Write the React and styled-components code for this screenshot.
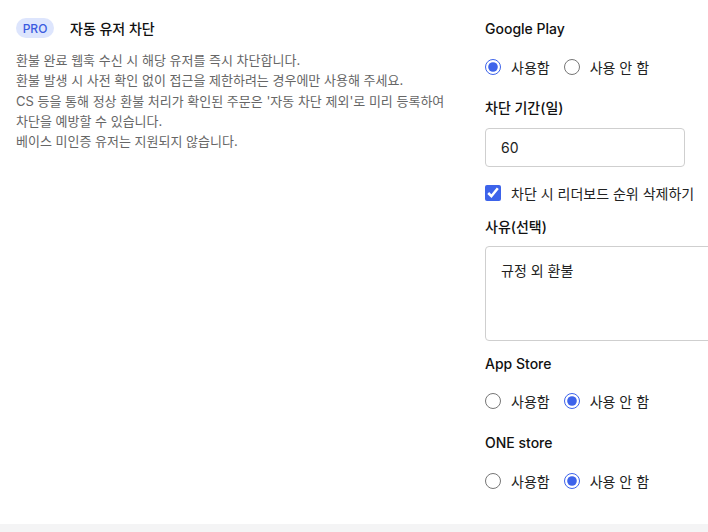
import React from "react";
import styled, { createGlobalStyle } from "styled-components";

const Global = createGlobalStyle`
  html, body { margin: 0; padding: 0; background: #f4f4f5; overflow: hidden; }
  body { font-family: Inter, "Noto Sans CJK KR", sans-serif; color: #222; }
  * { box-sizing: border-box; }
`;

const Page = styled.div`
  background: #fff;
  display: flex;
  gap: 29px;
  padding: 18px 0 33px 16px;
  overflow: hidden;
`;

const LeftCol = styled.div`
  width: 440px;
  flex-shrink: 0;
`;

const Header = styled.div`
  display: flex;
  align-items: center;
  gap: 16px;
  height: 20px;
`;

const Badge = styled.span`
  display: inline-flex;
  align-items: center;
  justify-content: center;
  width: 38px;
  height: 20px;
  border-radius: 10px;
  background: #dde5fd;
  color: #3a5be0;
  font-size: 12px;
  font-weight: 500;
`;

const Title = styled.span`
  font-size: 14px;
  font-weight: 500;
  color: #111;
`;

const Desc = styled.p`
  margin: 12px 0 0;
  font-size: 13px;
  line-height: 20.3px;
  color: #666;
  white-space: nowrap;
`;

const RightCol = styled.div`
  width: 300px;
  flex-shrink: 0;
  display: flex;
  flex-direction: column;
`;

const Label = styled.div`
  font-size: 14px;
  font-weight: 500;
  line-height: 20px;
  color: #111;
  margin-top: ${(p) => p.$mt || 0}px;
`;

const RadioRow = styled.div`
  display: flex;
  align-items: center;
  height: 20px;
  margin-top: ${(p) => p.$mt || 0}px;
  gap: 14px;
`;

const Option = styled.label`
  display: inline-flex;
  align-items: center;
  gap: 10px;
  font-size: 14px;
  color: #222;
`;

const Radio = styled.input.attrs({ type: "radio" })`
  width: 16px;
  height: 16px;
  margin: 0;
  accent-color: #3d63ea;
`;

const Check = styled.input.attrs({ type: "checkbox" })`
  width: 16px;
  height: 16px;
  margin: 0;
  accent-color: #3d63ea;
`;

const TextInput = styled.input`
  width: 200px;
  height: 39px;
  margin-top: 10px;
  border: 1px solid #cfcfcf;
  border-radius: 4px;
  padding: 0 15px;
  font-family: inherit;
  font-size: 14px;
  color: #222;
  outline: none;
`;

const CheckRow = styled.label`
  display: flex;
  align-items: center;
  gap: 10px;
  height: 20px;
  margin-top: 16px;
  font-size: 14px;
  color: #222;
`;

const TextArea = styled.textarea`
  width: 260px;
  height: 95px;
  margin-top: 9px;
  border: 1px solid #cfcfcf;
  border-radius: 4px;
  padding: 14px 15px;
  font-family: inherit;
  font-size: 14px;
  line-height: 20px;
  color: #222;
  resize: none;
  outline: none;
`;

function RadioGroup({ name, value, mt }) {
  return (
    <RadioRow $mt={mt}>
      <Option>
        <Radio name={name} defaultChecked={value === "on"} />
        사용함
      </Option>
      <Option>
        <Radio name={name} defaultChecked={value === "off"} />
        사용 안 함
      </Option>
    </RadioRow>
  );
}

export default function App() {
  return (
    <>
      <Global />
      <Page>
        <LeftCol>
          <Header>
            <Badge>PRO</Badge>
            <Title>자동 유저 차단</Title>
          </Header>
          <Desc>
            환불 완료 웹훅 수신 시 해당 유저를 즉시 차단합니다.
            <br />
            환불 발생 시 사전 확인 없이 접근을 제한하려는 경우에만 사용해 주세요.
            <br />
            CS 등을 통해 정상 환불 처리가 확인된 주문은 '자동 차단 제외'로 미리 등록하여
            <br />
            차단을 예방할 수 있습니다.
            <br />
            베이스 미인증 유저는 지원되지 않습니다.
          </Desc>
        </LeftCol>
        <RightCol>
          <Label $mt={1}>Google Play</Label>
          <RadioGroup name="gp" value="on" mt={18} />
          <Label $mt={21}>차단 기간(일)</Label>
          <TextInput defaultValue="60" />
          <CheckRow>
            <Check defaultChecked />
            차단 시 리더보드 순위 삭제하기
          </CheckRow>
          <Label $mt={14}>사유(선택)</Label>
          <TextArea defaultValue="규정 외 환불" />
          <Label $mt={13}>App Store</Label>
          <RadioGroup name="as" value="off" mt={17} />
          <Label $mt={22}>ONE store</Label>
          <RadioGroup name="one" value="off" mt={18} />
        </RightCol>
      </Page>
    </>
  );
}
